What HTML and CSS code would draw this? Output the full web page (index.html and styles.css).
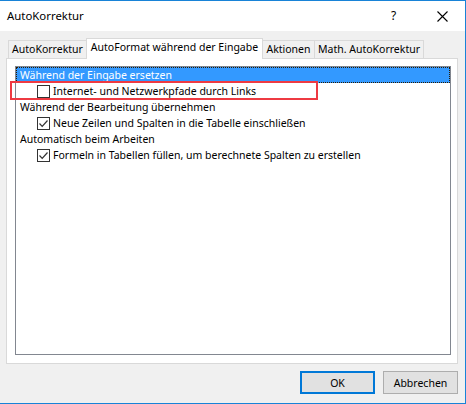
FILE: index.html
```html
<!DOCTYPE html>
<html lang="de">
<head>
<meta charset="utf-8">
<title>AutoKorrektur</title>
<link rel="stylesheet" href="styles.css">
</head>
<body>
<div class="window">
  <div class="titlebar">
    <span class="title">AutoKorrektur</span>
    <span class="help">?</span>
    <span class="close">
      <svg width="11" height="11" viewBox="0 0 11 11"><path d="M0.5 0.5 L10.5 10.5 M10.5 0.5 L0.5 10.5" stroke="#000" stroke-width="1.1" fill="none"/></svg>
    </span>
  </div>
  <div class="client">
    <div class="tabs">
      <div class="tab t1">AutoKorrektur</div>
      <div class="tab active t2">AutoFormat während der Eingabe</div>
      <div class="tab t3">Aktionen</div>
      <div class="tab t4">Math. AutoKorrektur</div>
    </div>
    <div class="panel">
      <div class="listbox">
        <div class="row head selected">Während der Eingabe ersetzen</div>
        <div class="row item"><span class="cb"></span>Internet- und Netzwerkpfade durch Links</div>
        <div class="row head">Während der Bearbeitung übernehmen</div>
        <div class="row item"><span class="cb checked"><svg width="11" height="11" viewBox="0 0 11 11"><path d="M1.5 5.5 L4.2 8.3 L9.5 2.5" stroke="#333" stroke-width="1.2" fill="none"/></svg></span>Neue Zeilen und Spalten in die Tabelle einschließen</div>
        <div class="row head">Automatisch beim Arbeiten</div>
        <div class="row item"><span class="cb checked"><svg width="11" height="11" viewBox="0 0 11 11"><path d="M1.5 5.5 L4.2 8.3 L9.5 2.5" stroke="#333" stroke-width="1.2" fill="none"/></svg></span>Formeln in Tabellen füllen, um berechnete Spalten zu erstellen</div>
      </div>
    </div>
    <div class="buttons">
      <button class="btn default">OK</button>
      <button class="btn">Abbrechen</button>
    </div>
  </div>
  <div class="highlight"></div>
</div>
</body>
</html>
```
FILE: styles.css
```css
html, body {
  margin: 0;
  padding: 0;
  background: #f0f0f0;
}
body {
  width: 466px;
  height: 404px;
  overflow: hidden;
  font-family: "Noto Sans", "Open Sans", sans-serif;
  font-size: 10.5px;
  color: #000;
}
.window {
  position: relative;
  width: 465px;
  height: 402px;
  border-top: 1px solid #1883d7;
  border-right: 1px solid #1883d7;
  border-bottom: 1px solid #1883d7;
  background: #f0f0f0;
}
.titlebar {
  height: 30px;
  background: #fff;
  display: flex;
  align-items: center;
  padding-left: 7px;
}
.title {
  flex: 1;
  font-size: 11.4px;
  line-height: 16px;
}
.help {
  width: 12px;
  margin-right: 34px;
  font-size: 12px;
  line-height: 16px;
}
.close {
  width: 11px;
  height: 11px;
  margin-right: 17px;
  display: flex;
}
.client {
  padding-top: 7px;
}
.tabs {
  display: flex;
  align-items: flex-end;
  height: 20px;
  padding-left: 8px;
  position: relative;
  z-index: 2;
}
.tab {
  box-sizing: border-box;
  height: 18px;
  border: 1px solid #d9d9d9;
  border-bottom: none;
  background: #f0f0f0;
  line-height: 17px;
  text-align: center;
  white-space: nowrap;
}
.t1 { width: 79px; }
.t2 { width: 177px; }
.t3 { width: 53px; margin-left: -1px; }
.t4 { width: 110px; margin-left: -1px; }
.tab.active {
  height: 21px;
  margin-bottom: -1px;
  margin-left: -1px;
  background: #fff;
  line-height: 17px;
  position: relative;
  z-index: 3;
}
.panel {
  position: relative;
  z-index: 1;
  margin-left: 6px;
  border: 1px solid #d9d9d9;
  background: #fff;
  padding: 7px 5px 7px 8px;
  box-sizing: border-box;
  width: 452px;
  height: 306px;
}
.listbox {
  box-sizing: border-box;
  width: 436px;
  height: 289px;
  border: 1px solid #828790;
  background: #fff;
  display: flex;
  flex-direction: column;
}
.row {
  height: 16px;
  line-height: 16px;
  display: flex;
  align-items: center;
  white-space: nowrap;
}
.head {
  padding-left: 4px;
}
.selected {
  box-sizing: border-box;
  background: #3399ff;
  color: #fff;
  border: 1px dotted #2a1a00;
  padding-left: 3px;
}
.item {
  padding-left: 21px;
}
.cb {
  box-sizing: border-box;
  width: 13px;
  height: 13px;
  border: 1px solid #333;
  background: #fff;
  margin-right: 3px;
  display: flex;
  align-items: center;
  justify-content: center;
}
.buttons {
  display: flex;
  justify-content: flex-end;
  gap: 8px;
  padding-right: 7px;
  margin-top: 7px;
}
.btn {
  box-sizing: border-box;
  width: 75px;
  height: 23px;
  background: #e1e1e1;
  border: 1px solid #adadad;
  font-family: "Noto Sans", "Open Sans", sans-serif;
  font-size: 10.5px;
  color: #000;
  padding: 0;
  margin: 0;
}
.btn.default {
  border: 2px solid #0078d7;
}
.highlight {
  position: absolute;
  left: 10px;
  top: 80px;
  width: 308px;
  height: 19px;
  box-sizing: border-box;
  border: 2px solid #ee3a42;
  pointer-events: none;
  z-index: 5;
}
```
